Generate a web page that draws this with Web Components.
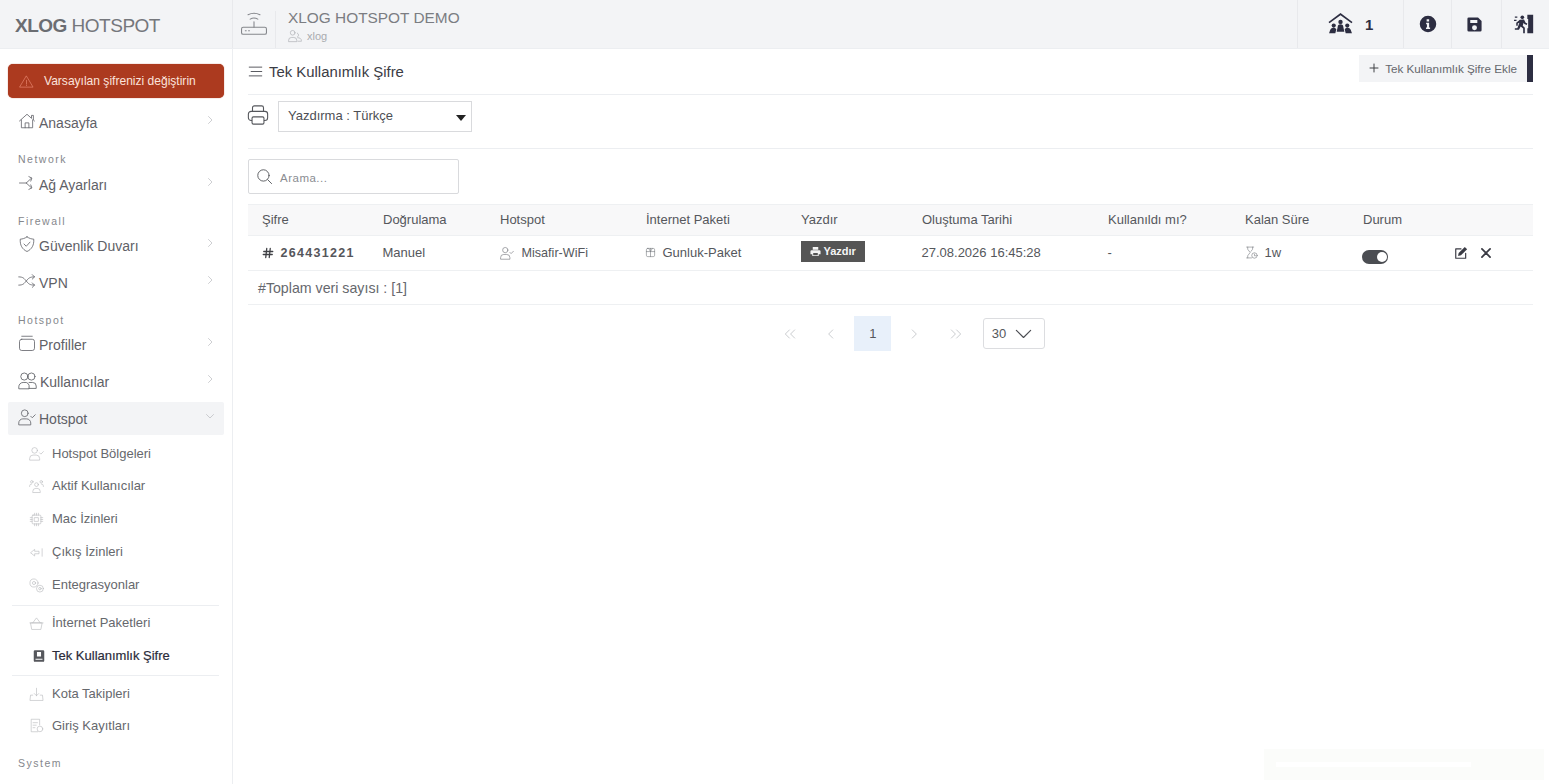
<!DOCTYPE html>
<html lang="tr">
<head>
<meta charset="utf-8">
<title>XLOG HOTSPOT</title>
<style>
    html, body { margin: 0; height: 100%; overflow: hidden; background: #fff; }
    body { font-family: "Liberation Sans", Arial, sans-serif; color: #3f4254; }
</style>
</head>
<body>
<hs-app></hs-app>
<script>
// stroke icons are drawn on a 24 box, solid ones carry fill="currentColor" themselves
const ICONS = {
    router: '<rect x="0.500" y="15" width="23" height="6.500" rx="1.500"/><path d="M4 18.300h.8M7 18.300h.8"/><path d="M12 15v-5"/><path d="M8.500 7.500a7 7 0 0 1 7 0M6.500 3.500a12 12 0 0 1 11 0"/>',
    chevR: '<path d="M9 5l7 7-7 7"/>',
    chevD: '<path d="M5 9l7 7 7-7"/>',
    chevWide: '<path d="M3 8l9 9 9-9"/>',
    warn: '<path d="M12 3.500L22.500 21h-21z"/><path d="M12 10v5.500M12 17.500v1"/>',
    home: '<path d="M2 12L12 3l6 5.500V4.500h2.500v6.300L22 12"/><path d="M4.500 10.500V21h15V10.500"/><path d="M9.500 21v-6.500h5V21"/>',
    share: '<path d="M2 12h9"/><path d="M11 12l7-6.500M11 12l7 6.500"/><path d="M14.500 3.500l4 2-1.500 4M14.500 20.500l4-2-1.500-4"/>',
    shield: '<path d="M12 2.500c3 2 6 3 9 3 .5 8-2.500 13.500-9 16.500C5.500 19 2.500 13.500 3 5.500c3 0 6-1 9-3z"/><path d="M8 12l3 3 5-5.500"/>',
    shuffle: '<path d="M1 6.500c6 0 7 2 10 5.500s4 5.500 11 5.500"/><path d="M1 17.500c6 0 7-2 10-5.500s4-5.500 11-5.500"/><path d="M19 3.500l3 3-3 3M19 14.500l3 3-3 3"/>',
    box: '<rect x="2" y="7" width="20" height="15" rx="3"/><path d="M5 3h14"/>',
    users: '<circle cx="8" cy="7" r="4.500"/><circle cx="17" cy="7" r="4.500"/><path d="M1 22v-2a5.500 5.500 0 0 1 5.500-5.500h4A5.500 5.500 0 0 1 14 18v4z"/><path d="M14 14.500h4.500A4.500 4.500 0 0 1 23 19v3h-9"/>',
    userCheck: '<circle cx="9" cy="7" r="4.500"/><path d="M1 22v-2a5.500 5.500 0 0 1 5.500-5.500h5A5.500 5.500 0 0 1 17 20v2z"/><path d="M17 11l2 2 4-4"/>',
    userLine: '<circle cx="8" cy="6.500" r="4"/><path d="M1 21v-1.500A5 5 0 0 1 6 14.500h4a5 5 0 0 1 5 5V21z"/><path d="M16 7a4 4 0 0 1 0 7M17 15a5 5 0 0 1 6 5v1h-6"/>',
    team: '<circle cx="12" cy="9" r="3"/><path d="M6 21v-1a5 5 0 0 1 5-5h2a5 5 0 0 1 5 5v1z"/><circle cx="4.500" cy="4.500" r="2"/><circle cx="19.500" cy="4.500" r="2"/><path d="M1 12v-1a3 3 0 0 1 3-3M23 12v-1a3 3 0 0 0-3-3"/>',
    chip: '<rect x="5" y="5" width="14" height="14" rx="1.500"/><rect x="9" y="9" width="6" height="6"/><path d="M9 2v3M12 2v3M15 2v3M9 19v3M12 19v3M15 19v3M2 9h3M2 12h3M2 15h3M19 9h3M19 12h3M19 15h3"/>',
    exitLine: '<path d="M3 12l6-5v3h7v4H9v3z"/><path d="M21 6v12"/>',
    gears: '<circle cx="8" cy="8" r="6.500"/><circle cx="8" cy="8" r="2.500"/><circle cx="17.500" cy="17" r="5.500"/><circle cx="17.500" cy="17" r="2"/>',
    basket: '<path d="M3 11h18l-2 10.500H5z"/><path d="M6 11l6-8 6 8"/><path d="M1.500 11h21"/>',
    book: '<path fill="currentColor" stroke="none" d="M5 2h14a2 2 0 0 1 2 2v16a2 2 0 0 1-2 2H5a2 2 0 0 1-2-2V4a2 2 0 0 1 2-2zm3.500 3v8h7V5zM6 16.500v2h12v-2z"/>',
    tray: '<path d="M12 2v12M8.500 10.500L12 14l3.500-3.500"/><path d="M6 13H2.500L1.500 21.500h21L21.500 13H18"/>',
    logs: '<path d="M14 22H3.500V2H17v9"/><path d="M6.500 7.500h7M6.500 11.500h5M6.500 15.500h3"/><circle cx="17.500" cy="17.500" r="4.500"/>',
    menu: '<path d="M2 5h20M5 12h17M2 19h20"/>',
    search: '<circle cx="10.500" cy="10.500" r="8"/><path d="M16.500 16.500L22 22"/>',
    printer: '<path d="M6 8V4a2 2 0 0 1 2-2h8a2 2 0 0 1 2 2v4"/><rect x="1.500" y="8" width="21" height="10" rx="3"/><rect x="5.500" y="14" width="13" height="8" rx="1.500" fill="#fff"/>',
    gift: '<rect x="3" y="3" width="18" height="18" rx="3"/><path d="M3 10h18M12 3v18M8 3l4 7 4-7"/>',
    hourglass: '<path d="M3 2h13M3 22h9M5 2v4l4.500 6L5 18v4M14 2v4l-3 4"/><circle cx="17.500" cy="17.500" r="5"/><path d="M17.500 15v3h2"/>',
    dLeft: '<path d="M11 5l-7 7 7 7M20 5l-7 7 7 7"/>',
    dRight: '<path d="M4 5l7 7-7 7M13 5l7 7-7 7"/>',
    left: '<path d="M15 5l-7 7 7 7"/>',
    plus: '<path d="M12 4v16M4 12h16"/>',
    hash: '<path d="M9.500 3L7.500 21M16.500 3l-2 18M3.500 9h18M2.500 15h18"/>',
    x: '<path d="M5 5l14 14M19 5L5 19"/>',
    info: '<path fill="currentColor" stroke="none" fill-rule="evenodd" d="M12 1a11 11 0 1 1 0 22 11 11 0 0 1 0-22zm-1.800 4.600h3.300v3.200h-3.300zM9.500 10.400h4v6.200h1.300v2H9.300v-2h1.300v-4.200H9.500z"/>',
    save: '<path fill="currentColor" stroke="none" fill-rule="evenodd" d="M4 2h13l5 5v13a2 2 0 0 1-2 2H4a2 2 0 0 1-2-2V4a2 2 0 0 1 2-2zm2 3.500V10h10V5.500zM12 13a3.500 3.500 0 1 0 0 7 3.500 3.500 0 0 0 0-7z"/>',
    door: '<g fill="currentColor" stroke="none"><path d="M16 1h7v22h-7v-6h1V6h-1z"/><circle cx="10" cy="4" r="2.200"/><path d="M7 7l5-.5 2 4 2 1-.7 1.800-2.800-1.300-1-1.500-1 3.500 2.500 2.500V23h-2v-5.500l-3-2.500-2 4H1v-2h3l2.500-6.500-2 1V14H2.700v-3.500z"/><path d="M1 3h3v1.500H1zM0 7h3v1.500H0z"/></g>',
    roof: '<g fill="currentColor" stroke="none"><path d="M12 1L0.500 9.500l.9 1.200L12 3.200l10.600 7.500.9-1.200z"/><circle cx="12" cy="9.500" r="2.100"/><path d="M8.300 19l1-4.500a2.700 2.700 0 0 1 5.400 0l1 4.500z"/><circle cx="5.500" cy="13" r="2"/><path d="M1 20.500l1.200-3.500a3.500 3.500 0 0 1 5.800-.5l-1 4z"/><circle cx="18.500" cy="13" r="2"/><path d="M17 20.500l-1-4a3.500 3.500 0 0 1 5.800.5l1.200 3.500z"/></g>',
    edit: '<path d="M20 12.500V21H3V5h9"/><path fill="currentColor" stroke="none" d="M18.500 1.500l4 4L12 16l-5 1 1-5z"/>',
    printSolid: '<path fill="currentColor" stroke="none" fill-rule="evenodd" d="M6 2h12v6H6zM3.500 9h17A2.500 2.500 0 0 1 23 11.500V18h-4v4H5v-4H1v-6.500A2.500 2.500 0 0 1 3.500 9zM7 15v5h10v-5z"/>'
};

class HsIcon extends HTMLElement {
    connectedCallback() {
        const size = this.getAttribute("size") || 16;
        const sw = this.getAttribute("stroke") || 1.5;
        this.attachShadow({ mode: "open" }).innerHTML = `
            <style>
                :host { display: inline-flex; flex: none; line-height: 0; }
            </style>
            <svg width="${size}" height="${size}" viewBox="0 0 24 24" fill="none" stroke="currentColor"
                 stroke-width="${sw}" stroke-linecap="round" stroke-linejoin="round">${ICONS[this.getAttribute("name")] || ""}</svg>`;
    }
}
customElements.define("hs-icon", HsIcon);

class HsHeader extends HTMLElement {
    constructor() {
        super();
        this.attachShadow({ mode: "open" }).innerHTML = `
            <style>
                :host { display: flex; height: 48px; background: #f3f4f6; border-bottom: 1px solid #eceef1; color: #3f4254; }
                .brand { padding-left: 15px; box-sizing: border-box; font-size: 19px; letter-spacing: -.5px; line-height: 51px; color: #75777c; border-right: 1px solid #e8e9ec; white-space: nowrap; flex: none; width: 233px; }
                .brand b { color: #6b6d72; }
                .router { width: 43px; display: flex; align-items: center; padding-left: 8px; box-sizing: border-box; color: #85878c; flex: none; position: relative; }
                .router::after { content: ""; position: absolute; right: 0; top: 11px; bottom: 0; width: 1px; background: #e8e9ec; }
                .who { flex: 1; padding: 8px 0 0 12px; }
                .who .t { font-size: 15.400px; line-height: 19px; color: #7b7d82; }
                .who .s { display: flex; align-items: center; gap: 5px; font-size: 11px; line-height: 14px; margin-top: 2px; color: #a9abaf; }
                .cell { display: flex; align-items: center; justify-content: center; border-left: 1px solid #e8e9ec; color: #2d2e42; box-sizing: border-box; flex: none; }
                .count { width: 106px; justify-content: flex-start; gap: 12px; padding-left: 30px; font-weight: 700; font-size: 15px; }
                .cell.i { width: 48px; }
                .cell.w { width: 50px; padding-right: 4px; }
                .cell.d { padding-right: 4px; }
            </style>
            <div class="brand"><b>XLOG</b> HOTSPOT</div>
            <div class="router"><hs-icon name="router" size="26" stroke="1"></hs-icon></div>
            <div class="who">
                <div class="t">XLOG HOTSPOT DEMO</div>
                <div class="s"><hs-icon name="userLine" size="14" stroke="1.100"></hs-icon>xlog</div>
            </div>
            <div class="cell count"><hs-icon name="roof" size="25"></hs-icon>1</div>
            <div class="cell i"><hs-icon name="info" size="18"></hs-icon></div>
            <div class="cell w"><hs-icon name="save" size="17"></hs-icon></div>
            <div class="cell i d"><hs-icon name="door" size="20"></hs-icon></div>`;
    }
}
customElements.define("hs-header", HsHeader);

// top level row of the left menu
class HsNavItem extends HTMLElement {
    connectedCallback() {
        const open = this.hasAttribute("open");
        this.attachShadow({ mode: "open" }).innerHTML = `
            <style>
                :host { display: flex; align-items: center; height: 33px; padding: 0 10px; box-sizing: border-box; font-size: 14px; color: #5f6167; border-radius: 2px; }
                :host([open]) { background: #f3f4f6; }
                .ic { color: #63656b; margin-right: 3px; margin-top: -3px; display: inline-flex; }
                .lb { flex: 1; white-space: nowrap; padding-top: 1px; }
                .ch { color: #b4b5b9; margin-top: -6px; margin-right: -2px; display: inline-flex; }
            </style>
            <span class="ic"><hs-icon name="${this.getAttribute("icon")}" size="${this.getAttribute("size") || 18}" stroke="1.100"></hs-icon></span>
            <span class="lb"><slot></slot></span>
            <span class="ch"><hs-icon name="${open ? "chevD" : "chevR"}" size="12" stroke="1.300"></hs-icon></span>`;
    }
}
customElements.define("hs-nav-item", HsNavItem);

class HsSubItem extends HTMLElement {
    connectedCallback() {
        this.attachShadow({ mode: "open" }).innerHTML = `
            <style>
                :host { display: flex; align-items: center; height: 33px; padding-left: 17px; font-size: 13px; color: #66686d; white-space: nowrap; }
                :host([active]) { color: #2b2c3a; -webkit-text-stroke: 0.200px #2b2c3a; }
                .ic { width: 23px; box-sizing: border-box; color: #b9babd; display: inline-flex; margin-top: 1px; flex: none; }
                :host([active]) .ic { color: #55575c; padding-left: 3px; }
            </style>
            <span class="ic"><hs-icon name="${this.getAttribute("icon")}" size="${this.hasAttribute("active") ? 14 : 15}" stroke="1"></hs-icon></span>
            <slot></slot>`;
    }
}
customElements.define("hs-sub-item", HsSubItem);

class HsSidebar extends HTMLElement {
    constructor() {
        super();
        this.attachShadow({ mode: "open" }).innerHTML = `
            <style>
                :host { display: block; width: 233px; flex: none; box-sizing: border-box; border-right: 1px solid #eceef1; padding: 15px 8px 0; overflow: hidden; }
                .alert { display: flex; align-items: center; height: 34px; background: #ac3a1f; color: #fbe3dc; border-radius: 5px; font-size: 12.050px; padding-left: 11px; margin-bottom: 8px; box-shadow: 0 0 1px #ac3a1f; }
                .alert hs-icon { color: #ee8f78; margin-right: 10px; }
                .sec { font-size: 10.500px; letter-spacing: 1.500px; color: #85878c; padding-left: 10px; line-height: 12px; }
                hs-nav-item { margin-bottom: 4px; }
                .sub { padding: 0 5px 0 4px; }
                .sub hr { border: 0; border-top: 1px solid #eceef1; margin: 0; }
                .sub hs-sub-item:first-child { height: 32px; margin-top: -2px; }
            </style>
            <div class="alert"><hs-icon name="warn" size="15" stroke="1"></hs-icon>Varsayılan şifrenizi değiştirin</div>
            <hs-nav-item icon="home" style="margin-bottom:14px">Anasayfa</hs-nav-item>
            <div class="sec" style="margin-bottom:3px">Network</div>
            <hs-nav-item icon="share" style="margin-bottom:14px">Ağ Ayarları</hs-nav-item>
            <div class="sec" style="margin-bottom:2px">Firewall</div>
            <hs-nav-item icon="shield">Güvenlik Duvarı</hs-nav-item>
            <hs-nav-item icon="shuffle" style="margin-bottom:15px">VPN</hs-nav-item>
            <div class="sec" style="margin-bottom:2px">Hotspot</div>
            <hs-nav-item icon="box">Profiller</hs-nav-item>
            <hs-nav-item icon="users" size="19">Kullanıcılar</hs-nav-item>
            <hs-nav-item icon="userCheck" open>Hotspot</hs-nav-item>
            <div class="sub">
                <hs-sub-item icon="userCheck">Hotspot Bölgeleri</hs-sub-item>
                <hs-sub-item icon="team">Aktif Kullanıcılar</hs-sub-item>
                <hs-sub-item icon="chip">Mac İzinleri</hs-sub-item>
                <hs-sub-item icon="exitLine">Çıkış İzinleri</hs-sub-item>
                <hs-sub-item icon="gears">Entegrasyonlar</hs-sub-item>
                <hr style="margin-top:4px">
                <hs-sub-item icon="basket">İnternet Paketleri</hs-sub-item>
                <hs-sub-item icon="book" active>Tek Kullanımlık Şifre</hs-sub-item>
                <hr style="margin-top:3px">
                <hs-sub-item icon="tray" style="margin-top:1px">Kota Takipleri</hs-sub-item>
                <hs-sub-item icon="logs" style="height:30px;margin-bottom:2px">Giriş Kayıtları</hs-sub-item>
            </div>
            <div class="sec" style="margin-top:17px">System</div>`;
    }
}
customElements.define("hs-sidebar", HsSidebar);

class HsTable extends HTMLElement {
    constructor() {
        super();
        this.attachShadow({ mode: "open" }).innerHTML = `
            <style>
                :host { display: block; font-size: 13px; color: #55575c; }
                .g { display: grid; grid-template-columns: 121px 117px 146px 155px 121px 186px 137px 118px 1fr; align-items: center; border-bottom: 1px solid #eef0f2; }
                .g > div { padding-left: 14px; white-space: nowrap; display: flex; align-items: center; }
                .head { height: 29px; padding-bottom: 1px; background: #f8f8f9; border-top: 1px solid #eef0f2; color: #55575c; }
                .row { height: 33px; padding-bottom: 1px; }
                .row > div { padding-left: 13.500px !important; }
                .pw { font-weight: 700; letter-spacing: 1.300px; gap: 7px; color: #55565b; font-size: 12.500px; }
                .pw hs-icon { color: #3f4045; }
                .gap { gap: 7px; }
                .gap hs-icon { color: #77797e; }
                .fit { font-size: 12.600px; }
                .btn { display: inline-flex; align-items: center; gap: 3px; background: #555; color: #f4f4f4; font-size: 11px; font-weight: 700; height: 21px; padding: 0 9px; margin-top: -3px; }
                .sw { width: 26px; height: 14px; border-radius: 8px; background: #4b4d52; position: relative; margin-top: 9px; margin-left: -1px; flex: none; }
                .sw::after { content: ""; position: absolute; right: 1px; top: 2px; width: 10px; height: 10px; border-radius: 50%; background: #fff; }
                .act { display: inline-flex; align-items: center; gap: 11px; color: #3a3b44; margin-left: 66px; }
                .foot { height: 33px; border-bottom: 1px solid #eef0f2; padding-left: 10px; display: flex; align-items: center; font-size: 14.200px; color: #66686d; }
            </style>
            <div class="g head">
                <div>Şifre</div><div>Doğrulama</div><div>Hotspot</div><div>İnternet Paketi</div><div>Yazdır</div>
                <div>Oluştuma Tarihi</div><div>Kullanıldı mı?</div><div>Kalan Süre</div><div>Durum</div>
            </div>
            <div class="g row">
                <div class="pw"><hs-icon name="hash" size="12" stroke="2.600"></hs-icon>264431221</div>
                <div>Manuel</div>
                <div class="gap fit" style="gap:8px"><hs-icon name="userCheck" size="14" stroke="1.100"></hs-icon>Misafir-WiFi</div>
                <div class="gap" style="margin-left:-1px"><hs-icon name="gift" size="11" stroke="1.300"></hs-icon>Gunluk-Paket</div>
                <div><span class="btn"><hs-icon name="printSolid" size="11"></hs-icon>Yazdır</span></div>
                <div>27.08.2026 16:45:28</div>
                <div>-</div>
                <div class="gap"><hs-icon name="hourglass" size="13" stroke="1.100"></hs-icon>1w</div>
                <div><span class="sw"></span>
                    <span class="act"><hs-icon name="edit" size="14" stroke="2"></hs-icon><hs-icon name="x" size="14" stroke="3"></hs-icon></span>
                </div>
            </div>
            <div class="foot">#Toplam veri sayısı : [1]</div>`;
    }
}
customElements.define("hs-table", HsTable);

class HsPager extends HTMLElement {
    constructor() {
        super();
        this.attachShadow({ mode: "open" }).innerHTML = `
            <style>
                :host { display: flex; justify-content: center; align-items: center; padding: 11px 0 0 35px; height: 35px; color: #b9bbc0; }
                a { width: 37px; height: 35px; margin-right: 4.500px; display: flex; align-items: center; justify-content: center; font-size: 13px; }
                a.on { background: #e8f0fa; color: #55575c; }
                .size { display: flex; align-items: center; justify-content: space-between; box-sizing: border-box; width: 62px; height: 31px; margin-left: 4px; padding: 0 11px 0 8px; border: 1px solid #dcdde0; border-radius: 3px; font-size: 13px; color: #55575c; }
                .size hs-icon { color: #4b4d52; }
            </style>
            <a><hs-icon name="dLeft" size="14" stroke="1.300"></hs-icon></a>
            <a><hs-icon name="left" size="14" stroke="1.300"></hs-icon></a>
            <a class="on">1</a>
            <a><hs-icon name="chevR" size="14" stroke="1.300"></hs-icon></a>
            <a><hs-icon name="dRight" size="14" stroke="1.300"></hs-icon></a>
            <div class="size">30<hs-icon name="chevWide" size="19" stroke="1.500"></hs-icon></div>`;
    }
}
customElements.define("hs-pager", HsPager);

class HsOtpPage extends HTMLElement {
    constructor() {
        super();
        this.attachShadow({ mode: "open" }).innerHTML = `
            <style>
                :host { display: block; flex: 1; min-width: 0; padding: 0 16px 0 15px; color: #3f4254; }
                .title { display: flex; align-items: center; height: 45px; border-bottom: 1px solid #eceef1; font-size: 14.900px; color: #3b3c45; gap: 6px; }
                .title hs-icon { color: #44454c; }
                .title .sp { flex: 1; }
                .add { display: flex; align-items: center; height: 27px; padding-bottom: 1px; box-sizing: border-box; margin-top: -6px; background: #f3f4f6; font-size: 11.700px; color: #66686d; padding-left: 9px; border-right: 6px solid #2d2e42; gap: 5px; padding-right: 10px; }
                .add hs-icon { color: #3f4045; }
                .print { display: flex; align-items: flex-start; gap: 9px; height: 47px; padding-top: 6px; border-bottom: 1px solid #eceef1; }
                .print > hs-icon { color: #55575c; margin: 3px 0 0 -1px; }
                .sel { display: flex; align-items: center; justify-content: space-between; box-sizing: border-box; width: 194px; height: 31px; border: 1px solid #d9dadd; padding: 0 5px 2px 9px; font-size: 13px; color: #4d4f55; }
                .sel i { border: 5px solid transparent; border-top: 6px solid #222; border-bottom: 0; margin-top: 4px; }
                .search { display: flex; align-items: center; gap: 7px; box-sizing: border-box; width: 211px; height: 35px; border: 1px solid #d9dadd; border-radius: 2px; margin: 10px 0 10px; padding: 2px 0 0 7px; font-size: 11.500px; color: #8a8c91; letter-spacing: .5px; }
                .search hs-icon { color: #55575c; margin-top: -2px; }
            </style>
            <div class="title">
                <hs-icon name="menu" size="15" stroke="1.400"></hs-icon>Tek Kullanımlık Şifre
                <span class="sp"></span>
                <div class="add"><hs-icon name="plus" size="12" stroke="2"></hs-icon>Tek Kullanımlık Şifre Ekle</div>
            </div>
            <div class="print">
                <hs-icon name="printer" size="22" stroke="1.200"></hs-icon>
                <div class="sel">Yazdırma : Türkçe<i></i></div>
            </div>
            <div class="search"><hs-icon name="search" size="17" stroke="1.300"></hs-icon>Arama...</div>
            <hs-table></hs-table>
            <hs-pager></hs-pager>`;
    }
}
customElements.define("hs-otp-page", HsOtpPage);

// pale notification fading out in the corner, its text is no longer legible
class HsToast extends HTMLElement {
    constructor() {
        super();
        this.attachShadow({ mode: "open" }).innerHTML = `
            <style>
                :host { position: absolute; right: 5px; bottom: 4px; width: 280px; height: 31px; background: #fbfcfa; display: flex; align-items: center; padding-left: 12px; box-sizing: border-box; }
                i { display: block; width: 195px; height: 5px; background: #fff; }
            </style>
            <i></i>`;
    }
}
customElements.define("hs-toast", HsToast);

class HsApp extends HTMLElement {
    constructor() {
        super();
        this.attachShadow({ mode: "open" }).innerHTML = `
            <style>
                :host { display: flex; flex-direction: column; height: 784px; position: relative; overflow: hidden; }
                .body { flex: 1; display: flex; min-height: 0; }
            </style>
            <hs-header></hs-header>
            <div class="body">
                <hs-sidebar></hs-sidebar>
                <hs-otp-page></hs-otp-page>
            </div>
            <hs-toast></hs-toast>`;
    }
}
customElements.define("hs-app", HsApp);
</script>
</body>
</html>
